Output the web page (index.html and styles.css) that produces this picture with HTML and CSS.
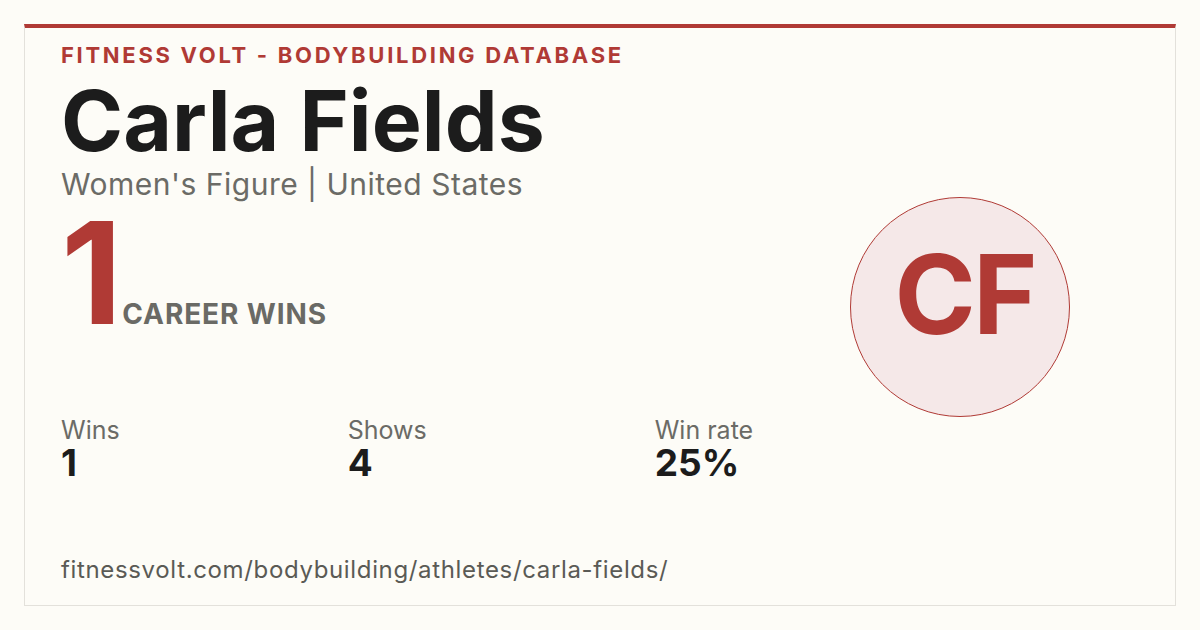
FILE: index.html
```html
<!DOCTYPE html>
<html lang="en">
<head>
<meta charset="utf-8">
<title>Carla Fields - Fitness Volt</title>
<link rel="stylesheet" href="styles.css">
</head>
<body>
<div class="card">
  <div class="main">
    <div class="info">
      <div class="brand">FITNESS VOLT - BODYBUILDING DATABASE</div>
      <h1 class="name">Carla Fields</h1>
      <div class="sub">Women's Figure | United States</div>
      <div class="wins">
        <span class="wins-num">1</span>
        <span class="wins-label">CAREER WINS</span>
      </div>
      <div class="stats">
        <div class="stat"><div class="stat-label">Wins</div><div class="stat-value">1</div></div>
        <div class="stat"><div class="stat-label">Shows</div><div class="stat-value">4</div></div>
        <div class="stat"><div class="stat-label">Win rate</div><div class="stat-value">25%</div></div>
      </div>
    </div>
    <div class="side">
      <div class="avatar">CF</div>
    </div>
  </div>
  <div class="url">fitnessvolt.com/bodybuilding/athletes/carla-fields/</div>
</div>
</body>
</html>
```
FILE: styles.css
```css
html, body {
  margin: 0;
  padding: 0;
}
body {
  width: 1200px;
  height: 630px;
  background: #fdfcf7;
  font-family: Inter, "Noto Sans", "DejaVu Sans", sans-serif;
  padding: 24px;
  box-sizing: border-box;
}
.card {
  height: 582px;
  box-sizing: border-box;
  border: 1px solid #e3e1db;
  border-top: 4px solid #b03a35;
  padding: 12px 36px 20px 36px;
  display: flex;
  flex-direction: column;
}
.main {
  display: flex;
  flex: 1;
}
.info {
  flex: 1;
}
.brand {
  color: #b03a35;
  font-weight: 700;
  font-size: 22px;
  letter-spacing: 2.7px;
  line-height: 30px;
}
.name {
  margin: 0;
  font-size: 84px;
  font-weight: 700;
  color: #1c1c1c;
  line-height: 102px;
  letter-spacing: 0.1px;
}
.sub {
  font-size: 30px;
  color: #6b6b66;
  line-height: 36px;
  letter-spacing: 0.5px;
  margin-top: -6px;
}
.wins {
  display: flex;
  align-items: baseline;
  margin-top: 10px;
}
.wins-num {
  font-size: 142px;
  font-weight: 700;
  color: #b03a35;
  line-height: 120px;
  letter-spacing: -4px;
}
.wins-label {
  font-size: 28px;
  font-weight: 700;
  color: #6a6a65;
  letter-spacing: 0.9px;
  margin-left: 4px;
}
.stats {
  display: flex;
  gap: 228px;
  margin-top: 84px;
}
.stat-label {
  font-size: 25px;
  color: #6b6b66;
  line-height: 28px;
}
.stat-value {
  font-size: 37px;
  font-weight: 700;
  color: #1c1c1c;
  line-height: 37px;
}
.side {
  width: 220px;
  margin-right: 69px;
  padding-top: 157px;
}
.avatar {
  width: 220px;
  height: 220px;
  box-sizing: border-box;
  border-radius: 50%;
  border: 1.5px solid #b03a35;
  background: #f5e8e8;
  color: #b03a35;
  font-size: 110px;
  font-weight: 700;
  letter-spacing: -3px;
  display: flex;
  align-items: center;
  justify-content: center;
  padding-bottom: 26px;
  padding-left: 9px;
}
.url {
  font-size: 24px;
  color: #5a5a55;
  line-height: 30px;
  letter-spacing: 0.65px;
}
```
